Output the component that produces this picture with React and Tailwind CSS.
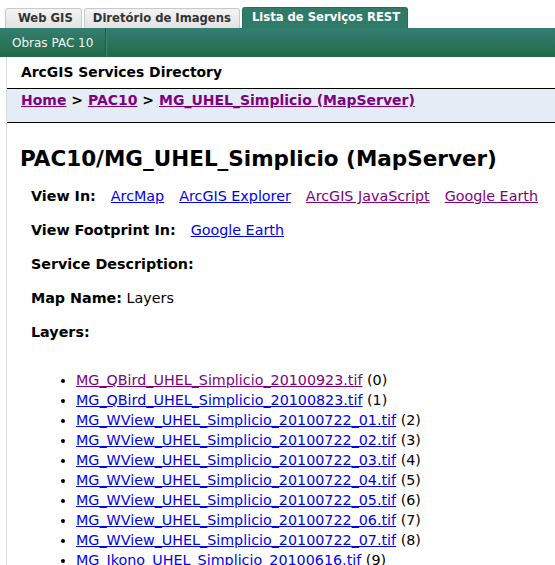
import React from 'react';

const tabs = [
  { name: 'Web GIS', active: false, pad: 'pl-[12px] pr-[8px]' },
  { name: 'Diretório de Imagens', active: false, pad: 'px-[8px]' },
  { name: 'Lista de Serviços REST', active: true, pad: 'pl-[9px] pr-[7px]' },
];

const viewIn = [
  { name: 'ArcMap', visited: false },
  { name: 'ArcGIS Explorer', visited: false },
  { name: 'ArcGIS JavaScript', visited: true },
  { name: 'Google Earth', visited: true },
];

const layers = [
  { name: 'MG_QBird_UHEL_Simplicio_20100923.tif', visited: true },
  { name: 'MG_QBird_UHEL_Simplicio_20100823.tif' },
  { name: 'MG_WView_UHEL_Simplicio_20100722_01.tif' },
  { name: 'MG_WView_UHEL_Simplicio_20100722_02.tif' },
  { name: 'MG_WView_UHEL_Simplicio_20100722_03.tif' },
  { name: 'MG_WView_UHEL_Simplicio_20100722_04.tif' },
  { name: 'MG_WView_UHEL_Simplicio_20100722_05.tif' },
  { name: 'MG_WView_UHEL_Simplicio_20100722_06.tif' },
  { name: 'MG_WView_UHEL_Simplicio_20100722_07.tif' },
  { name: 'MG_Ikono_UHEL_Simplicio_20100616.tif' },
];

const App = () => {
  return (
    <div className="w-[555px] h-[565px] overflow-hidden bg-white font-['DejaVu_Sans',Verdana,sans-serif] text-black">
      {/* Tabs */}
      <div className="flex items-end gap-[2px] pl-[5px] pt-[8px] h-[28px]">
        {tabs.map((tab) =>
          tab.active ? (
            <div
              key={tab.name}
              className={`h-[21px] ${tab.pad} flex items-center rounded-t-[3px] bg-[#2f7b68] border border-b-0 border-[#276e5a] text-white text-[11.6px] font-bold whitespace-nowrap`}
            >
              {tab.name}
            </div>
          ) : (
            <div
              key={tab.name}
              className={`h-[20px] ${tab.pad} flex items-center rounded-t-[3px] bg-gradient-to-b from-[#f4f4f4] to-[#e2e2e2] border border-b-0 border-[#c8c8c8] text-[#333] text-[11.6px] font-bold whitespace-nowrap`}
            >
              {tab.name}
            </div>
          )
        )}
      </div>

      {/* Green sub-nav */}
      <div className="h-[29px] flex items-stretch bg-gradient-to-b from-[#348070] to-[#22694a]">
        <div className="flex items-center px-[12px] text-[12px] text-[#f0f6f2] border-r border-[#1d5a40] shadow-[1px_0_0_#3d8a72]">
          Obras PAC 10
        </div>
      </div>

      {/* Body */}
      <div className="ml-[6px] border-l border-[#dadada] h-full">
        <div className="pl-[14px] pt-[5px] h-[31px] text-[13.9px] font-bold">ArcGIS Services Directory</div>

        <div className="h-[35px] bg-[#e4edf6] border-y border-black pl-[14px] pt-[1px] text-[14px] font-bold whitespace-nowrap">
          <a className="text-[#800080] underline" href="#">Home</a>
          <span> &gt; </span>
          <a className="text-[#800080] underline" href="#">PAC10</a>
          <span> &gt; </span>
          <a className="text-[#800080] underline" href="#">MG_UHEL_Simplicio (MapServer)</a>
        </div>

        <h2 className="pl-[13px] mt-[23px] text-[21.5px] font-bold leading-[26px] whitespace-nowrap">
          PAC10/MG_UHEL_Simplicio (MapServer)
        </h2>

        <div className="pl-[24px] mt-[16px] flex flex-col gap-[17px] text-[14.3px] leading-[17px] whitespace-nowrap">
          <div className="flex">
            <b className="mr-[15px]">View In:</b>
            <div className="flex gap-[15px]">
              {viewIn.map((v) => (
                <a
                  key={v.name}
                  href="#"
                  className={`underline ${v.visited ? 'text-[#800080]' : 'text-[#0000f0]'}`}
                >
                  {v.name}
                </a>
              ))}
            </div>
          </div>
          <div className="flex">
            <b className="mr-[15px]">View Footprint In:</b>
            <a href="#" className="underline text-[#0000f0]">Google Earth</a>
          </div>
          <div>
            <b>Service Description:</b>
          </div>
          <div>
            <b>Map Name:</b> Layers
          </div>
          <div>
            <b>Layers:</b>
          </div>
        </div>

        <ul className="list-disc pl-[69px] mt-[29px] text-[14.3px] leading-[20px] whitespace-nowrap">
          {layers.map((l, i) => (
            <li key={l.name}>
              <a
                href="#"
                className={`underline ${l.visited ? 'text-[#800080]' : 'text-[#0000f0]'}`}
              >
                {l.name}
              </a>{' '}
              ({i})
            </li>
          ))}
        </ul>
      </div>
    </div>
  );
};

export default App;
